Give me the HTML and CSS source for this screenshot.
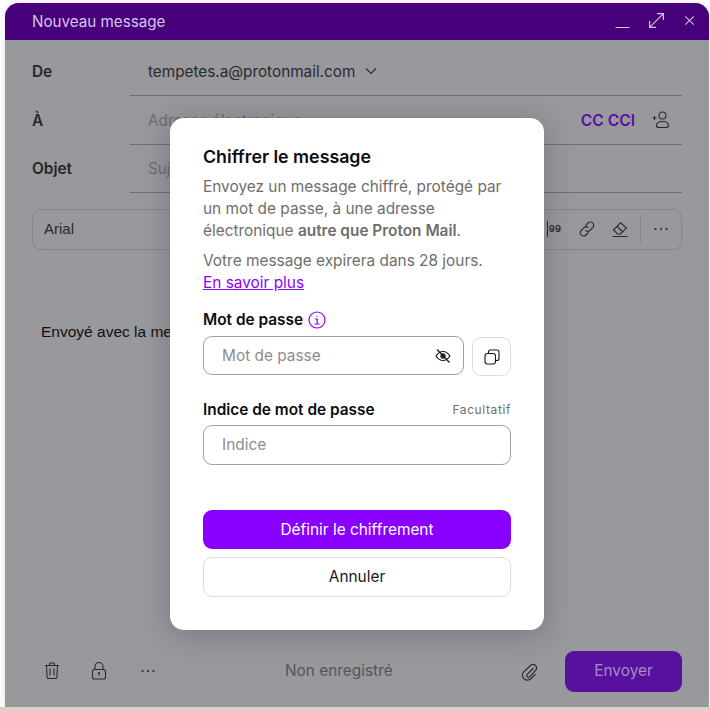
FILE: index.html
```html
<!DOCTYPE html>
<html lang="fr">
<head>
<meta charset="utf-8">
<title>Nouveau message</title>
<link rel="stylesheet" href="styles.css">
</head>
<body>
<div class="composer">
  <header class="titlebar">
    <span class="title">Nouveau message</span>
    <div class="winctl">
      <svg class="ic" viewBox="0 0 16 16"><path d="M0.500 13.500h14"/></svg>
      <svg class="ic" viewBox="0 0 16 16"><path d="M1.500 14.500 14.500 1.500M8.500 1.500h6v6M1.500 8.500v6h6"/></svg>
      <svg class="ic" viewBox="0 0 16 16"><path d="M3.500 3.500l9 9M12.500 3.500l-9 9"/></svg>
    </div>
  </header>
  <div class="fields">
    <div class="row">
      <label class="lbl">De</label>
      <div class="val">
        <span class="from">tempetes.a@protonmail.com</span>
        <svg class="chev" viewBox="0 0 16 16"><path d="M3 5.500l5 5 5-5"/></svg>
      </div>
    </div>
    <div class="row">
      <label class="lbl">À</label>
      <div class="val">
        <span class="ph">Adresse électronique</span>
        <span class="cc">CC CCI</span>
        <svg class="addc" viewBox="0 0 20 20"><path d="M1.500 8h4M3.500 6v4"/><circle cx="11.500" cy="5.500" r="3.500"/><path d="M5.500 15.500c0-3 2.500-4 6-4s6 1 6 4c0 1.500-1 2-2.500 2h-7c-1.500 0-2.500-.5-2.500-2z"/></svg>
      </div>
    </div>
    <div class="row short">
      <label class="lbl">Objet</label>
      <div class="val"><span class="ph">Sujet</span></div>
    </div>
  </div>
  <div class="toolbar">
    <span class="fontname">Arial</span>
    <div class="tools">
      <span class="quote">99</span>
      <svg class="ic20" viewBox="0 0 20 20"><path d="M8.500 6.500l2.500-2.500a3.200 3.200 0 0 1 4.800 4.500l-2.800 2.800a3.200 3.200 0 0 1-4.500 0M11.500 13.500l-2.500 2.500a3.200 3.200 0 0 1-4.800-4.500l2.800-2.800a3.200 3.200 0 0 1 4.500 0"/></svg>
      <svg class="ic20" viewBox="0 0 20 20"><path d="M3.500 11 10.500 3.800l6 5.200-6 6h-3zM7 7.500l6 5.500M2.500 17.500h15"/></svg>
      <span class="sep"></span>
      <svg class="dots" viewBox="0 0 16 4"><circle cx="2.500" cy="2" r="1.100"/><circle cx="8" cy="2" r="1.100"/><circle cx="13.500" cy="2" r="1.100"/></svg>
    </div>
  </div>
  <div class="editor">Envoyé avec la messagerie sécurisée Proton Mail.</div>
  <footer class="foot">
    <div class="foot-l">
      <svg class="ic20" viewBox="0 0 20 20"><path d="M3 4.500h14M7.500 4.500v-1.500c0-.5.300-1 1-1h3c.7 0 1 .5 1 1v1.500M4.500 4.500l.5 11c0 1 .7 2 2 2h6c1.300 0 2-1 2-2l.5-11M8 7.500v7M12 7.500v7"/></svg>
      <svg class="ic20" viewBox="0 0 20 20"><path d="M6 8.500v-3a4 4 0 0 1 8 0v3"/><rect x="3.500" y="8.500" width="13" height="9.500" rx="2"/><circle class="fill" cx="10" cy="12" r="1.100"/><path d="M10 12v2.500"/></svg>
      <svg class="dots" viewBox="0 0 16 4"><circle cx="2.500" cy="2" r="1.100"/><circle cx="8" cy="2" r="1.100"/><circle cx="13.500" cy="2" r="1.100"/></svg>
    </div>
    <span class="saved">Non enregistré</span>
    <svg class="ic20 clip" viewBox="0 0 20 20"><path d="M14.500 7 8 13.500a1.800 1.800 0 0 0 2.500 2.500l6-6.500a3.500 3.500 0 0 0-5-5L4.500 11a5 5 0 0 0 7 7l5-5"/></svg>
    <button class="send">Envoyer</button>
  </footer>
</div>
<div class="strip"></div>
<span class="tick"></span>
<section class="modal">
  <h2 class="m-title">Chiffrer le message</h2>
  <p class="m-text">Envoyez un message chiffré, protégé par un mot de passe, à une adresse électronique <strong>autre que Proton Mail</strong>.</p>
  <p class="m-text second">Votre message expirera dans 28 jours.<br><a class="link" href="#">En savoir plus</a></p>
  <div class="f-label first">
    <span>Mot de passe</span>
    <svg class="info" viewBox="0 0 18 18"><circle cx="9" cy="9" r="8"/><path d="M7.500 8h1.700v5M7 13h4.200M9 5.300v.1"/></svg>
  </div>
  <div class="pw-row">
    <div class="input grow">
      <span class="input-ph">Mot de passe</span>
      <svg class="eye" viewBox="0 0 16 16"><path d="M1 8c2-3 4.300-4.500 7-4.500S13 5 15 8c-2 3-4.300 4.500-7 4.500S3 11 1 8z"/><circle class="fill" cx="8" cy="8" r="2.700"/><path d="M2 1.500l12.500 13"/></svg>
    </div>
    <button class="copy">
      <svg class="ic16" viewBox="0 0 16 16"><rect x="1" y="4.500" width="10.500" height="10.500" rx="2.500"/><path d="M4.500 4.500v-1.500c0-1.200.8-2 2-2h6.500c1.200 0 2 .8 2 2v6.500c0 1.200-.8 2-2 2h-1.500"/></svg>
    </button>
  </div>
  <div class="f-label spread">
    <span>Indice de mot de passe</span>
    <span class="opt">Facultatif</span>
  </div>
  <div class="input hint"><span class="input-ph">Indice</span></div>
  <button class="btn primary">Définir le chiffrement</button>
  <button class="btn ghost">Annuler</button>
</section>
</body>
</html>
```
FILE: styles.css
```css
* { box-sizing: border-box; }
html, body { margin: 0; height: 100%; }
body {
  position: relative;
  width: 710px;
  height: 710px;
  overflow: hidden;
  background: #fff;
  padding: 3px 1px 0 5px;
  font-family: Inter, "Liberation Sans", sans-serif;
  color: #26262b;
}
.composer {
  display: flex;
  flex-direction: column;
  height: 704px;
  background: #98989d;
  border-radius: 14px 14px 0 0;
  overflow: hidden;
  box-shadow: 0 0 6px rgba(0,0,0,.12);
}
.strip { height: 3px; background: #d6d3c5; margin-left: -5px; margin-right: -1px; }
.titlebar {
  flex: none;
  height: 37px;
  background: #45007a;
  display: flex;
  align-items: center;
  justify-content: space-between;
  padding: 0 12px 0 27px;
  color: #dcc4f0;
  font-size: 15.200px;
}
.winctl { display: flex; align-items: center; gap: 17px; }
.ic { width: 16px; height: 16px; fill: none; stroke: #d9c0ee; stroke-width: 1.100; }
.winctl .ic:nth-child(2) { width: 17px; height: 17px; margin-top: -3px; }
.winctl .ic:nth-child(3) { width: 15px; height: 15px; margin-top: -2px; }
.fields { padding: 7px 27px 0 27px; }
.row { display: flex; height: 49px; }
.row.short { height: 48px; }
.lbl { width: 98px; padding-top: 15px; font-size: 15.400px; font-weight: 600; color: #26262b; }
.row.short .lbl { padding-top: 14px; }
.val {
  flex: 1;
  display: flex;
  align-items: center;
  padding: 0 11px 0 18px;
  border-bottom: 1px solid #6e6e73;
  font-size: 15.300px;
}
.from { color: #2a2a2f; }
.chev { width: 16px; height: 16px; margin-left: 8px; fill: none; stroke: #2a2a2f; stroke-width: 1.100; }
.ph { color: #6d6d72; flex: 1; }
.cc { color: #570fa0; font-weight: 600; font-size: 15.600px; margin-right: 16px; }
.addc { width: 20px; height: 20px; fill: none; stroke: #2a2a2f; stroke-width: 1.100; }
.toolbar {
  flex: none;
  margin: 16px 27px 0;
  height: 41px;
  border: 1px solid #85858a;
  border-radius: 9px;
  display: flex;
  align-items: center;
  justify-content: space-between;
  padding: 0 12px 1px 11px;
}
.fontname { font-family: "Liberation Sans", sans-serif; font-size: 15px; color: #2a2a2f; margin-top: -1px; }
.tools { display: flex; align-items: center; }
.quote { border-left: 1px solid #2a2a2f; padding-left: 1px; font-size: 9.500px; font-weight: 600; line-height: 16px; color: #2a2a2f; margin-right: 16px; }
.ic20 { width: 20px; height: 20px; fill: none; stroke: #2a2a2f; stroke-width: 1.100; }
.tools .ic20 + .ic20 { margin-left: 13px; }
.sep { width: 1px; height: 28px; background: #85858a; margin: 0 12px 0 10px; }
.dots { width: 16px; height: 4px; fill: #2a2a2f; }
.editor { flex: 1; padding: 73px 0 0 36px; font-family: "Liberation Sans", sans-serif; font-size: 15.500px; color: #111; white-space: nowrap; }
.foot { flex: none; height: 56px; margin-bottom: 8px; display: flex; align-items: center; padding: 0 27px 0 37px; }
.foot-l { display: flex; align-items: center; gap: 27px; width: 243px; }
.foot-l .dots { margin-left: 4px; }
.saved { flex: 1; color: #55555a; font-size: 15.400px; padding-bottom: 2px; }
.fill { fill: #2a2a2f; stroke: none; }
.clip { margin-right: 26px; }
.send {
  width: 117px;
  height: 41px;
  border: 0;
  border-radius: 9px;
  background: #58109f;
  color: #a78cc4;
  padding: 0 0 2px;
  font: 15.400px Inter, sans-serif;
}
.modal {
  position: absolute;
  left: 170px;
  top: 118px;
  width: 374px;
  height: 512px;
  background: #fff;
  border-radius: 14px;
  padding: 28px 33px 0;
  box-shadow: 0 4px 30px rgba(40,40,50,.3);
}
.m-title { margin: 0; font-size: 17.800px; line-height: 22px; font-weight: 600; color: #0c0c14; }
.m-text { margin: 8px 0 0; font-size: 15.400px; line-height: 22px; color: #706d6b; }
.m-text strong { font-weight: 600; }
.m-text.second { margin-top: 8px; }
.link { color: #8a00ff; }
.f-label {
  display: flex;
  align-items: center;
  gap: 5px;
  font-size: 15.400px;
  font-weight: 600;
  line-height: 20px;
  color: #0c0c14;
}
.f-label.first { margin-top: 16px; }
.f-label.spread { justify-content: space-between; margin-top: 24px; }
.opt { font-size: 12px; font-weight: 400; color: #706d6b; letter-spacing: .6px; }
.info { width: 18px; height: 18px; fill: none; stroke: #8a00ff; stroke-width: 1.200; stroke-linecap: round; }
.pw-row { display: flex; gap: 8px; margin-top: 6px; align-items: flex-start; }
.input {
  height: 39px;
  border: 1px solid #a3a1a0;
  border-radius: 9px;
  display: flex;
  align-items: center;
  justify-content: space-between;
  padding: 0 12px 0 18px;
}
.grow { flex: 1; }
.hint { height: 40px; margin-top: 5px; padding-bottom: 2px; }
.input-ph { font-size: 15.400px; color: #8f8d8b; }
.eye { width: 16px; height: 16px; fill: none; stroke: #17171c; stroke-width: 1.200; }
.copy {
  width: 39px;
  height: 39px;
  margin-top: 1px;
  padding: 0;
  background: #fff;
  border: 1px solid #dedddb;
  border-radius: 9px;
  display: flex;
  align-items: center;
  justify-content: center;
}
.ic16 { width: 16px; height: 16px; fill: none; stroke: #17171c; stroke-width: 1.100; }
.btn {
  display: block;
  width: 100%;
  height: 39px;
  border-radius: 9px;
  font: 15.400px Inter, sans-serif;
}
.primary { margin-top: 45px; background: #8a00ff; color: #fff; border: 0; }
.ghost { margin-top: 8px; height: 40px; padding: 0 0 2px; background: #fff; color: #17171c; border: 1px solid #dedddb; }
.tick { position: absolute; left: 190px; top: 328px; width: 6px; height: 1px; background: #e8202a; }
```
